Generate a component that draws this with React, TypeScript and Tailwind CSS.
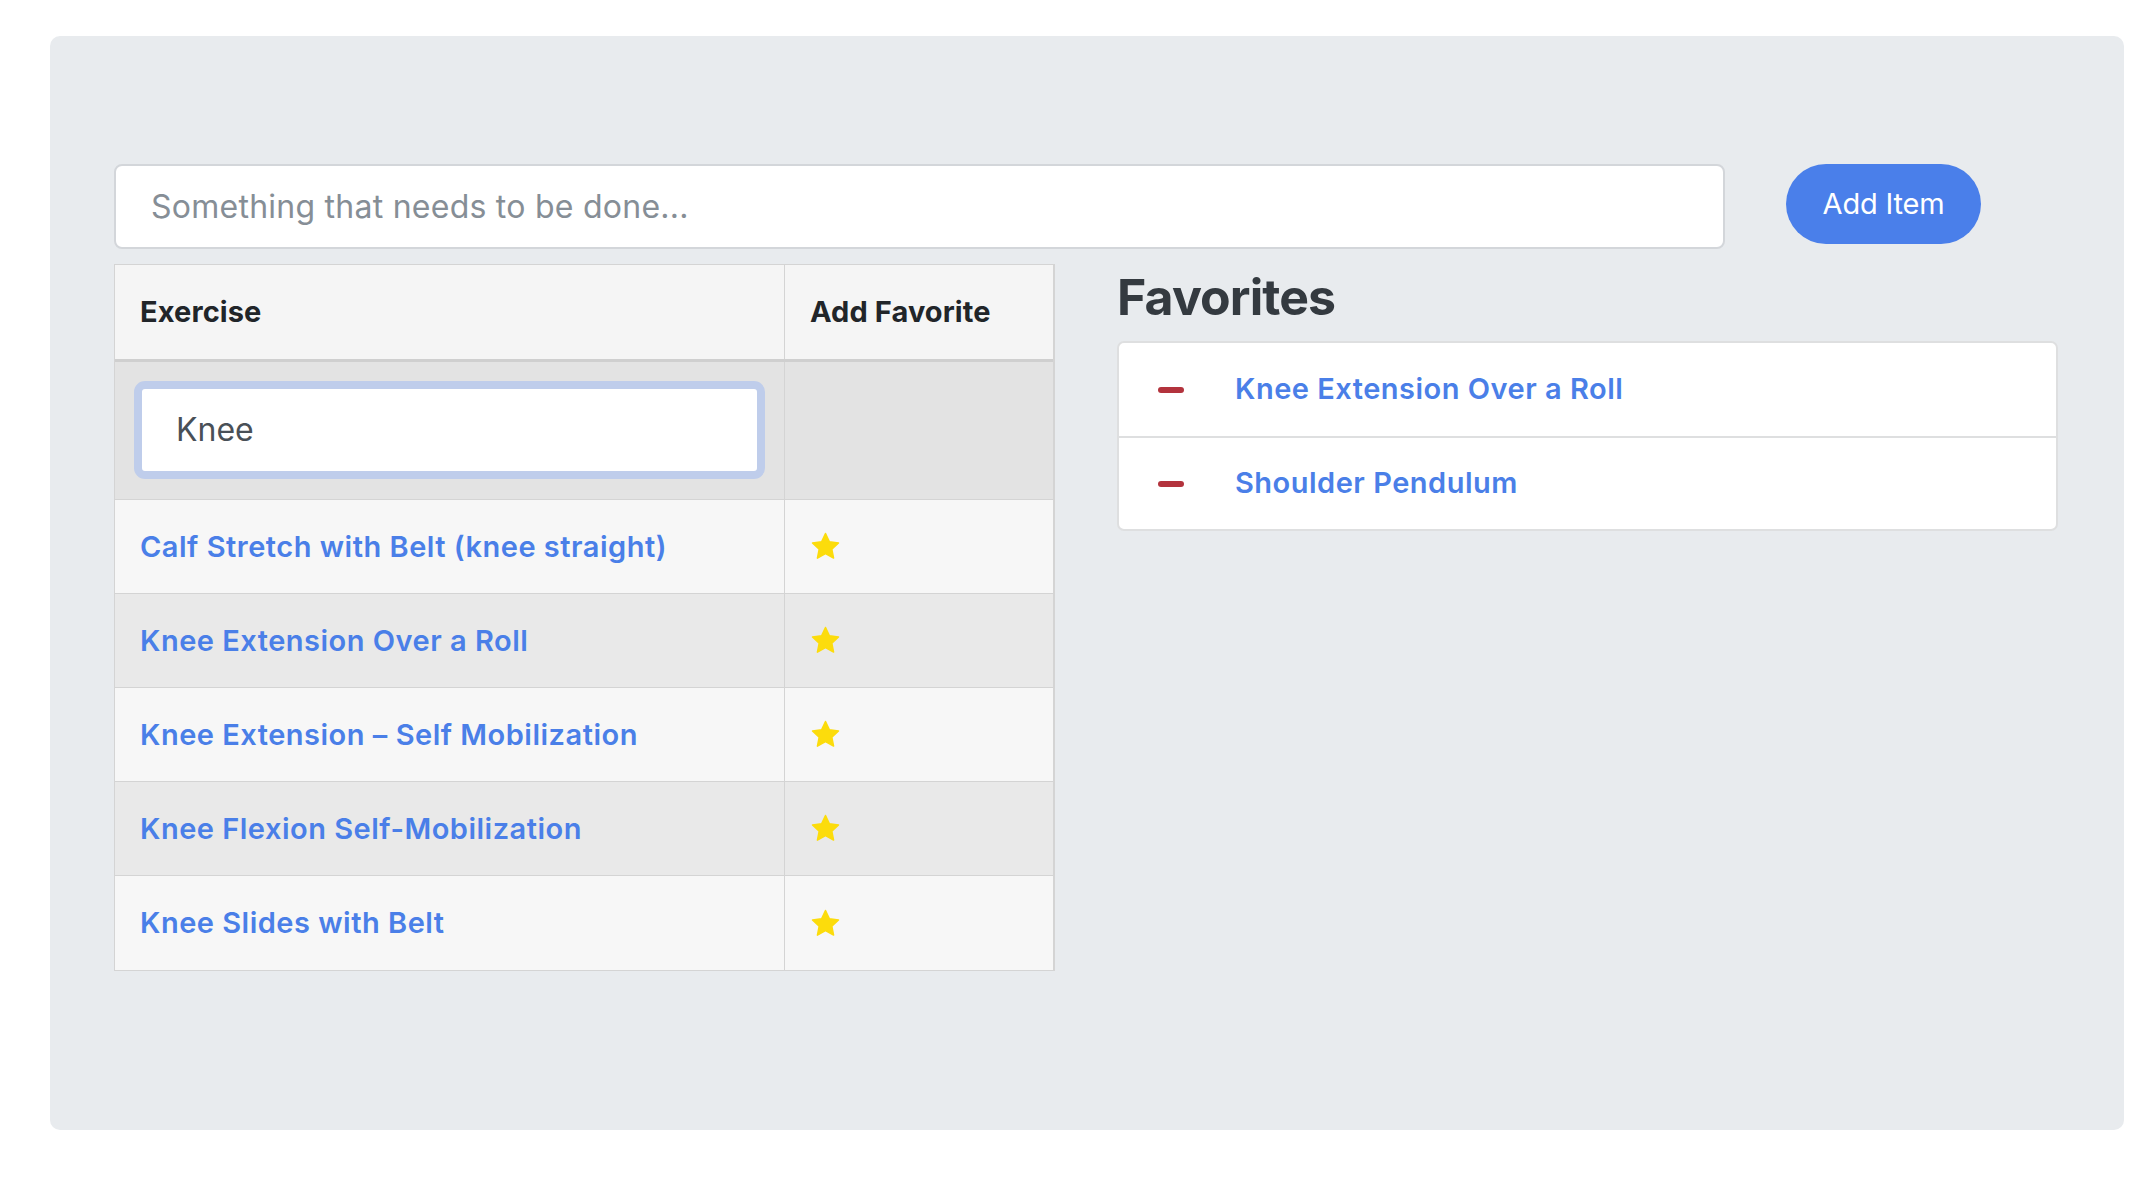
import React from 'react';

const exercises = [
  'Calf Stretch with Belt (knee straight)',
  'Knee Extension Over a Roll',
  'Knee Extension – Self Mobilization',
  'Knee Flexion Self-Mobilization',
  'Knee Slides with Belt',
];

const favorites = ['Knee Extension Over a Roll', 'Shoulder Pendulum'];

const font = { fontFamily: 'Inter, "Noto Sans", sans-serif' };

function Star() {
  return (
    <svg width="31" height="29" viewBox="0 0 24 23" className="block">
      <path
        d="M12 1.2l3.1 6.6 7.2.9-5.3 4.9 1.4 7.1L12 17.2l-6.4 3.5L7 13.6 1.7 8.7l7.2-.9z"
        fill="#fcdc0c"
        stroke="#fcdc0c"
        strokeWidth="1.2"
        strokeLinejoin="round"
      />
    </svg>
  );
}

export default function App() {
  return (
    <div className="min-h-screen bg-white pt-[36px] pl-[50px]" style={font}>
      <div className="w-[2074px] h-[1094px] rounded-[10px] bg-[#e8ebee] pt-[128px] pl-[64px]">
        {/* Add item row */}
        <div className="flex items-start w-[1944px]">
          <input
            className="w-[1611px] h-[85px] border-2 border-[#d3d6da] rounded-[8px] bg-white pl-[35px] text-[32px] tracking-[0.25px] text-[#495057] placeholder:text-[#868e96] outline-none"
            placeholder="Something that needs to be done..."
          />
          <button className="ml-[61px] w-[195px] h-[80px] rounded-full bg-[#4a7fea] text-white text-[29px] tracking-[-0.2px]">
            Add Item
          </button>
        </div>

        <div className="flex items-start mt-[15px] gap-[62px]">
          {/* Exercise table */}
          <div className="w-[941px] border border-[#d4d4d4] border-r-2 text-[29px]">
            <div className="flex h-[97px] bg-[#f5f5f5] border-b-[3px] border-[#cfcfcf] font-bold text-[#212529] tracking-[0.1px]">
              <div className="w-[670px] border-r border-[#d4d4d4] flex items-center pl-[25px]">Exercise</div>
              <div className="flex-1 flex items-center pl-[25px]">Add Favorite</div>
            </div>
            <div className="flex h-[138px] bg-[#e3e3e3] border-b border-[#d4d4d4]">
              <div className="w-[670px] border-r border-[#d4d4d4] pl-[19px] pt-[19px]">
                <div className="w-[631px] h-[98px] rounded-[11px] border-[8px] border-[#bfcdeb] bg-white flex items-center pl-[34px] text-[32px] text-[#495057]">
                  Knee
                </div>
              </div>
              <div className="flex-1" />
            </div>
            {exercises.map((name, i) => (
              <div
                key={name}
                className={`flex h-[94px] ${i < exercises.length - 1 ? 'border-b border-[#d4d4d4]' : ''} ${
                  i % 2 === 0 ? 'bg-[#f7f7f7]' : 'bg-[#e9e9e9]'
                }`}
              >
                <div className="w-[670px] border-r border-[#d4d4d4] flex items-center pl-[25px] font-semibold text-[#4a7fe8] tracking-[0.5px]">
                  {name}
                </div>
                <div className="flex-1 flex items-center pl-[25px]">
                  <Star />
                </div>
              </div>
            ))}
          </div>

          {/* Favorites */}
          <div className="w-[941px]">
            <h2 className="text-[50px] leading-[60px] pt-[3px] font-bold text-[#343a40] tracking-[-0.9px] mb-[14px]">Favorites</h2>
            <div className="bg-white border-2 border-[#dedfe0] rounded-[7px]">
              {favorites.map((name, i) => (
                <div
                  key={name}
                  className={`flex items-center h-[93px] ${i > 0 ? 'border-t-2 border-[#dedfe0]' : ''}`}
                >
                  <div className="ml-[39px] w-[26px] h-[6px] rounded-full bg-[#b3333d]" />
                  <span className="ml-[51px] -mt-[2px] text-[29px] font-semibold text-[#4a7fe8] tracking-[0.5px]">{name}</span>
                </div>
              ))}
            </div>
          </div>
        </div>
      </div>
    </div>
  );
}
